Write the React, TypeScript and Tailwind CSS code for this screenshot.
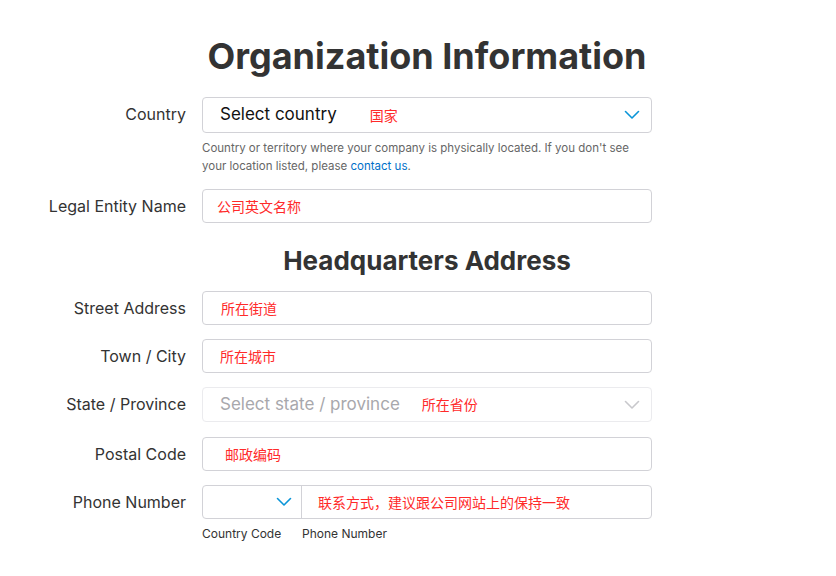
import React from "react";

const font = { fontFamily: "Inter, 'Noto Sans CJK SC', sans-serif" };

function Chevron({ light = false }: { light?: boolean }) {
  return (
    <svg width="16" height="10" viewBox="0 0 16 10" fill="none">
      <path
        d="M1.5 1.5 L8 8 L14.5 1.5"
        stroke={light ? "#c8c8cc" : "#0a95d8"}
        strokeWidth="1.6"
        strokeLinecap="round"
        strokeLinejoin="round"
      />
    </svg>
  );
}

function Row({
  label,
  children,
  className = "",
}: {
  label: string;
  children: React.ReactNode;
  className?: string;
}) {
  return (
    <div className={`flex items-start gap-4 ${className}`}>
      <label className="w-[170px] shrink-0 text-right text-[16px] leading-[34px] text-[#333]">
        {label}
      </label>
      <div className="w-[450px]">{children}</div>
    </div>
  );
}

function Note({ text, className = "" }: { text: string; className?: string }) {
  return (
    <span
      className={`text-[14px] text-[#ff2a2a] ${className}`}
      style={{ fontFamily: "'Noto Sans CJK SC', sans-serif" }}
    >
      {text}
    </span>
  );
}

function TextBox({ note, pad }: { note: string; pad: string }) {
  return (
    <div
      className={`flex h-[34px] items-center rounded border border-[#d2d2d7] bg-white ${pad}`}
    >
      <Note text={note} />
    </div>
  );
}

export default function App() {
  return (
    <div className="min-h-screen bg-white pl-4 pt-[34px]" style={font}>
      <div className="flex gap-4">
        <div className="w-[170px]" />
        <h1 className="w-[450px] whitespace-nowrap text-center text-[36px] font-bold leading-[44px] text-[#333]">
          Organization Information
        </h1>
      </div>

      <Row label="Country" className="mt-[19px]">
        <div className="flex h-[36px] items-center rounded border border-[#d2d2d7] bg-white pl-[17px] pr-[11px]">
          <span className="text-[17px] text-[#111]">Select country</span>
          <Note text="国家" className="ml-[33px]" />
          <div className="ml-auto flex items-center">
            <Chevron />
          </div>
        </div>
        <p className="mt-[6px] text-[11.5px] leading-[18px] text-[#666]">
          Country or territory where your company is physically located. If you
          don't see your location listed, please{" "}
          <a className="text-[#0070c9]" href="#">
            contact us
          </a>
          .
        </p>
      </Row>

      <Row label="Legal Entity Name" className="mt-[14px]">
        <TextBox note="公司英文名称" pad="pl-[14px]" />
      </Row>

      <div className="mt-[21px] flex gap-4">
        <div className="w-[170px]" />
        <h2 className="w-[450px] text-center text-[26px] font-bold leading-[34px] text-[#333]">
          Headquarters Address
        </h2>
      </div>

      <Row label="Street Address" className="mt-[13px]">
        <TextBox note="所在街道" pad="pl-[18px]" />
      </Row>

      <Row label="Town / City" className="mt-[14px]">
        <TextBox note="所在城市" pad="pl-[17px]" />
      </Row>

      <Row label="State / Province" className="mt-[14px]">
        <div className="flex h-[35px] items-center rounded border border-[#ebebee] bg-white pl-[17px] pr-[11px]">
          <span className="text-[17px] text-[#a8a8ac]">
            Select state / province
          </span>
          <Note text="所在省份" className="ml-[22px]" />
          <div className="ml-auto flex items-center">
            <Chevron light />
          </div>
        </div>
      </Row>

      <Row label="Postal Code" className="mt-[15px]">
        <TextBox note="邮政编码" pad="pl-[22px]" />
      </Row>

      <Row label="Phone Number" className="mt-[14px]">
        <div className="flex h-[34px] rounded border border-[#d2d2d7] bg-white">
          <div className="flex w-[99px] items-center justify-end border-r border-[#d2d2d7] pr-[9px]">
            <Chevron />
          </div>
          <div className="flex flex-1 items-center pl-[16px]">
            <Note text="联系方式，建议跟公司网站上的保持一致" />
          </div>
        </div>
        <div className="mt-[6px] flex text-[12px] leading-[18px] text-[#333]">
          <span className="w-[100px]">Country Code</span>
          <span>Phone Number</span>
        </div>
      </Row>
    </div>
  );
}
